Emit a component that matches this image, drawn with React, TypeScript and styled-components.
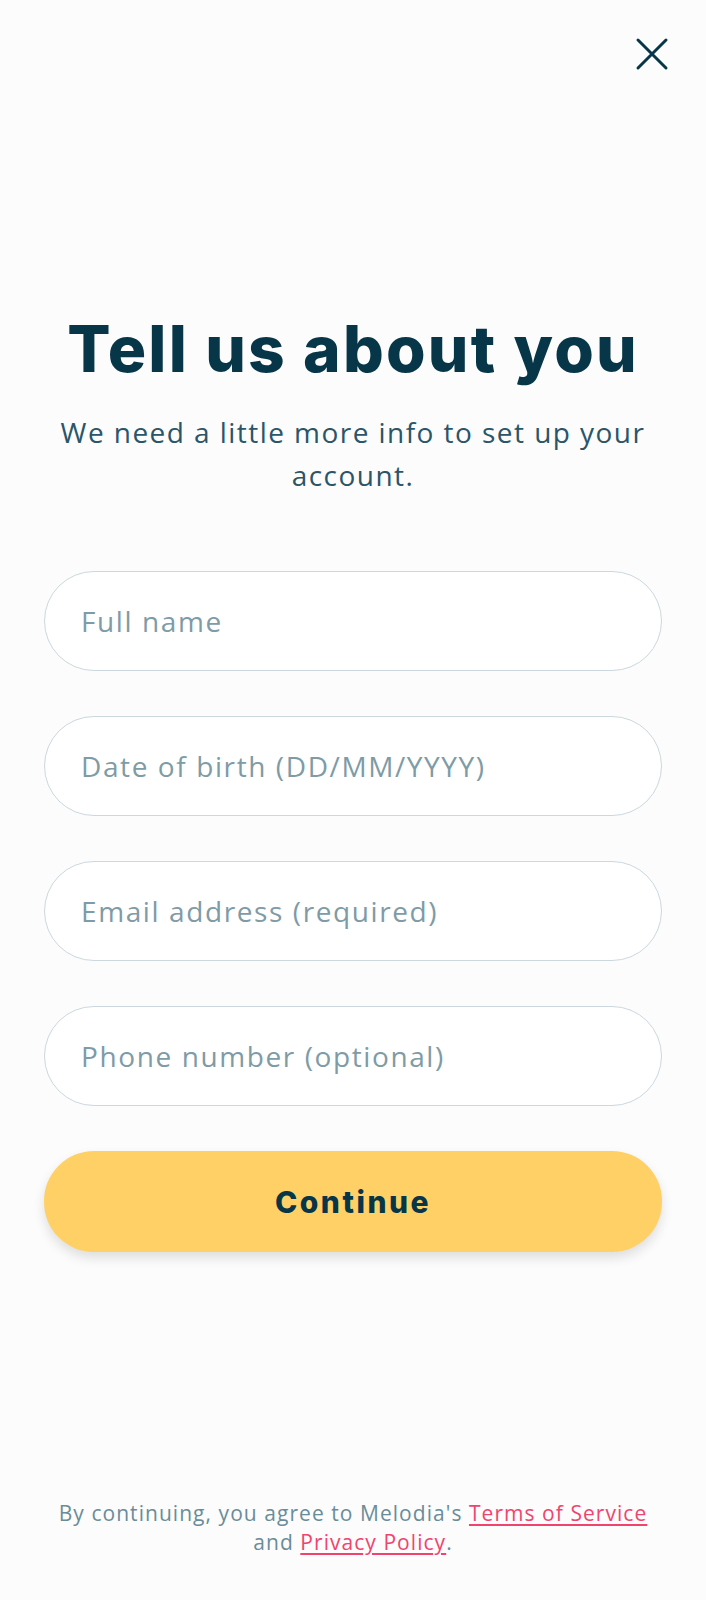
import React from "react";
import styled, { createGlobalStyle } from "styled-components";

const Global = createGlobalStyle`
  html, body { margin: 0; padding: 0; background: #fcfcfc; }
  * { box-sizing: border-box; }
`;

const Page = styled.div`
  min-height: 1600px;
  display: flex;
  flex-direction: column;
  padding: 0 44px 43px;
  position: relative;
  font-family: "Open Sans", "Noto Sans", sans-serif;
`;

const TopBar = styled.div`
  display: flex;
  justify-content: flex-end;
  padding-top: 36px;
  margin-right: -8px;
`;

const CloseButton = styled.button`
  width: 36px;
  height: 36px;
  border: none;
  background: transparent;
  padding: 0;
  display: flex;
  align-items: center;
  justify-content: center;
  cursor: pointer;
`;

const Heading = styled.h1`
  margin: 238px 0 0;
  text-align: center;
  font-family: "Inter", sans-serif;
  font-weight: 800;
  font-size: 64px;
  line-height: 78px;
  letter-spacing: 2.2px;
  color: #073649;
`;

const Subtitle = styled.p`
  margin: 23px 0 0;
  text-align: center;
  font-size: 28px;
  line-height: 43px;
  font-weight: 400;
  letter-spacing: 1.45px;
  color: #2b5568;
`;

const Form = styled.form`
  margin-top: 74px;
  display: flex;
  flex-direction: column;
  gap: 45px;
`;

const Field = styled.input`
  height: 100px;
  width: 100%;
  border: 1.5px solid #cbd8dd;
  border-radius: 50px;
  background: #ffffff;
  padding: 0 36px;
  font-family: "Open Sans", "Noto Sans", sans-serif;
  font-size: 28px;
  letter-spacing: 1.6px;
  color: #073649;
  outline: none;
  &::placeholder { color: #7e9ba6; }
`;

const Continue = styled.button`
  height: 101px;
  width: 100%;
  border: none;
  border-radius: 50px;
  background: #ffd066;
  box-shadow: 0 6px 12px rgba(0, 0, 0, 0.12);
  font-family: "Inter", sans-serif;
  font-weight: 800;
  font-size: 30px;
  letter-spacing: 2.5px;
  color: #073649;
  cursor: pointer;
`;

const Footer = styled.p`
  margin: auto 0 0;
  text-align: center;
  font-size: 21px;
  line-height: 29px;
  letter-spacing: 1.05px;
  color: #6a8c99;
`;

const Link = styled.a`
  color: #f0446e;
  text-decoration: underline;
  text-underline-offset: 3px;
`;

export default function App() {
  return (
    <>
      <Global />
      <Page>
        <TopBar>
          <CloseButton aria-label="Close">
            <svg width="34" height="34" viewBox="0 0 34 34">
              <path d="M3 3 L31 31 M31 3 L3 31" stroke="#073649" strokeWidth="3" strokeLinecap="round" />
            </svg>
          </CloseButton>
        </TopBar>
        <Heading>Tell us about you</Heading>
        <Subtitle>We need a little more info to set up your account.</Subtitle>
        <Form onSubmit={(e) => e.preventDefault()}>
          <Field placeholder="Full name" />
          <Field placeholder="Date of birth (DD/MM/YYYY)" />
          <Field placeholder="Email address (required)" />
          <Field placeholder="Phone number (optional)" />
          <Continue type="submit">Continue</Continue>
        </Form>
        <Footer>
          By continuing, you agree to Melodia's <Link href="#">Terms of Service</Link>
          <br />
          and <Link href="#">Privacy Policy</Link>.
        </Footer>
      </Page>
    </>
  );
}
